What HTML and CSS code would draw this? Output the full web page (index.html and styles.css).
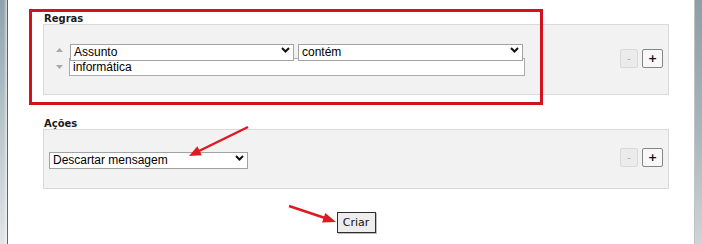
FILE: index.html
```html
<!DOCTYPE html>
<html lang="pt">

<head>
    <meta charset="UTF-8">
    <meta name="viewport" content="width=device-width, initial-scale=1.0">
    <title>Filtros</title>

    <link rel="stylesheet" href="styles.css">
</head>

<body>
    <div class="window">
        <div class="edge edge-left"></div>

        <div class="main">
            <div class="section">
                <div class="label">Regras</div>
                <div class="panel panel-rules">
                    <div class="rule">
                        <div class="rule-row">
                            <svg class="mover" width="7" height="4" viewBox="0 0 7 4"><polygon points="0,4 3.5,0 7,4" /></svg>
                            <div class="select-box field-header">
                                <select>
                                    <option>Assunto</option>
                                    <option>De</option>
                                    <option>Para</option>
                                </select>
                                <svg class="chevron" width="9" height="6" viewBox="0 0 9 6"><polyline points="1,1 4.5,4.5 8,1" /></svg>
                            </div>
                            <div class="select-box field-op">
                                <select>
                                    <option>contém</option>
                                    <option>não contém</option>
                                    <option>é igual a</option>
                                </select>
                                <svg class="chevron" width="9" height="6" viewBox="0 0 9 6"><polyline points="1,1 4.5,4.5 8,1" /></svg>
                            </div>
                        </div>
                        <div class="rule-row">
                            <svg class="mover" width="7" height="4" viewBox="0 0 7 4"><polygon points="0,0 7,0 3.5,4" /></svg>
                            <input type="text" class="text-input" value="informática">
                        </div>
                    </div>
                    <div class="pm">
                        <button class="btn-minus" disabled>-</button>
                        <button class="btn-plus">+</button>
                    </div>
                </div>
            </div>

            <div class="section section-actions">
                <div class="label">Ações</div>
                <div class="panel panel-actions">
                    <div class="select-box field-action">
                        <select>
                            <option>Descartar mensagem</option>
                            <option>Mover para a pasta</option>
                            <option>Encaminhar para</option>
                        </select>
                        <svg class="chevron" width="9" height="6" viewBox="0 0 9 6"><polyline points="1,1 4.5,4.5 8,1" /></svg>
                    </div>
                    <div class="pm">
                        <button class="btn-minus" disabled>-</button>
                        <button class="btn-plus">+</button>
                    </div>
                </div>
            </div>

            <div class="footer">
                <button class="btn-criar">Criar</button>
            </div>
        </div>

        <div class="edge edge-right"></div>

        <!-- marcações em vermelho por cima da tela -->
        <svg class="annotations" width="702" height="244" viewBox="0 0 702 244">
            <rect x="30.5" y="10.5" width="511" height="93" />
            <line x1="248" y1="127" x2="199" y2="151" />
            <polygon points="189,156 201.8,155.2 197.4,146.3" />
            <line x1="289" y1="206" x2="325" y2="218" />
            <polygon points="336,222 322.1,222.5 325.3,213.1" />
        </svg>
    </div>
</body>

</html>
```

FILE: styles.css
```css
body {
    margin: 0;
    background: #fff;
    font-family: "DejaVu Sans", Verdana, sans-serif;
}

.window {
    position: relative;
    display: flex;
    width: 702px;
    height: 244px;
    overflow: hidden;
}

.edge {
    flex: none;
    width: 7px;
}

.edge-left {
    background:
        linear-gradient(to right, rgba(255, 255, 255, 0) 0, rgba(255, 255, 255, 0) 55%, rgba(255, 255, 255, 0.6) 100%),
        linear-gradient(#8ea2ac, #bcc8ce 55%, #e1e5e7);
}

.edge-right {
    background: linear-gradient(#8c9ea8, #a8b6bd 55%, #cdd5d9);
}

.main {
    flex: 1;
    border-left: 1px solid #5f6468;
    border-right: 1px solid #c2c2c2;
    padding-top: 14px;
}

.section {
    margin: 0 25px 0 35px;
}

.section-actions {
    margin-top: 24px;
}

.label {
    height: 10px;
    padding-left: 1px;
    font-size: 10px;
    font-weight: bold;
    line-height: 10px;
    color: #1c1c1c;
}

.panel {
    display: flex;
    align-items: center;
    justify-content: space-between;
    background: #f2f2f2;
    border: 1px solid #dadada;
}

.panel-rules {
    padding: 16px 5px 18px 12px;
}

.panel-actions {
    padding: 18px 5px 21px 5px;
}

.rule-row {
    display: flex;
    align-items: center;
}

.mover {
    flex: none;
    margin-right: 7px;
    fill: #a9a9a9;
}

.select-box {
    position: relative;
    height: 17px;
}

.select-box select {
    appearance: none;
    -webkit-appearance: none;
    box-sizing: border-box;
    width: 100%;
    height: 100%;
    margin: 0;
    padding: 0 16px 0 3px;
    border: 1px solid #a2a2a2;
    border-radius: 0;
    background: #fff;
    color: #000;
    font-family: "Liberation Sans", Arial, sans-serif;
    font-size: 12px;
    outline: none;
}

.select-box .chevron {
    position: absolute;
    top: 6px;
    right: 4px;
    fill: none;
    stroke: #111;
    stroke-width: 2;
    pointer-events: none;
}

.field-header {
    width: 224px;
    margin-right: 4px;
}

.field-op {
    width: 225px;
}

.field-action {
    width: 199px;
}

.text-input {
    box-sizing: border-box;
    width: 456px;
    height: 18px;
    margin: 0 0 0 -1px;
    padding: 0 3px;
    border: 1px solid #ababab;
    border-radius: 0;
    background: #fff;
    color: #000;
    font-family: "Liberation Sans", Arial, sans-serif;
    font-size: 12px;
    outline: none;
}

.pm {
    display: flex;
    gap: 4px;
}

.pm button {
    box-sizing: border-box;
    height: 19px;
    margin: 0;
    padding: 0;
    border-radius: 2px;
    font-family: "DejaVu Sans", Verdana, sans-serif;
    font-size: 11px;
    line-height: 16px;
}

.btn-minus {
    width: 18px;
    border: 1px solid #d9d9d9;
    background: #ebebeb;
    color: #b0b0b0;
}

.btn-plus {
    width: 21px;
    border: 1px solid #858585;
    background: #f8f8f8;
    color: #111;
    font-weight: bold;
}

.footer {
    margin: 22px 25px 0 35px;
    text-align: center;
}

.btn-criar {
    box-sizing: border-box;
    width: 39px;
    height: 21px;
    margin: 0;
    padding: 0;
    border: 1px solid #2e2e2e;
    border-radius: 0;
    box-shadow: 1px 1px 0 #bdbdbd;
    background: #ededed;
    color: #111;
    font-family: "DejaVu Sans", Verdana, sans-serif;
    font-size: 11px;
}

.annotations {
    position: absolute;
    top: 0;
    left: 0;
    pointer-events: none;
}

.annotations rect {
    fill: none;
    stroke: #d0141c;
    stroke-width: 3;
}

.annotations line {
    stroke: #e0181f;
    stroke-width: 2.5;
}

.annotations polygon {
    fill: #e0181f;
}
```
